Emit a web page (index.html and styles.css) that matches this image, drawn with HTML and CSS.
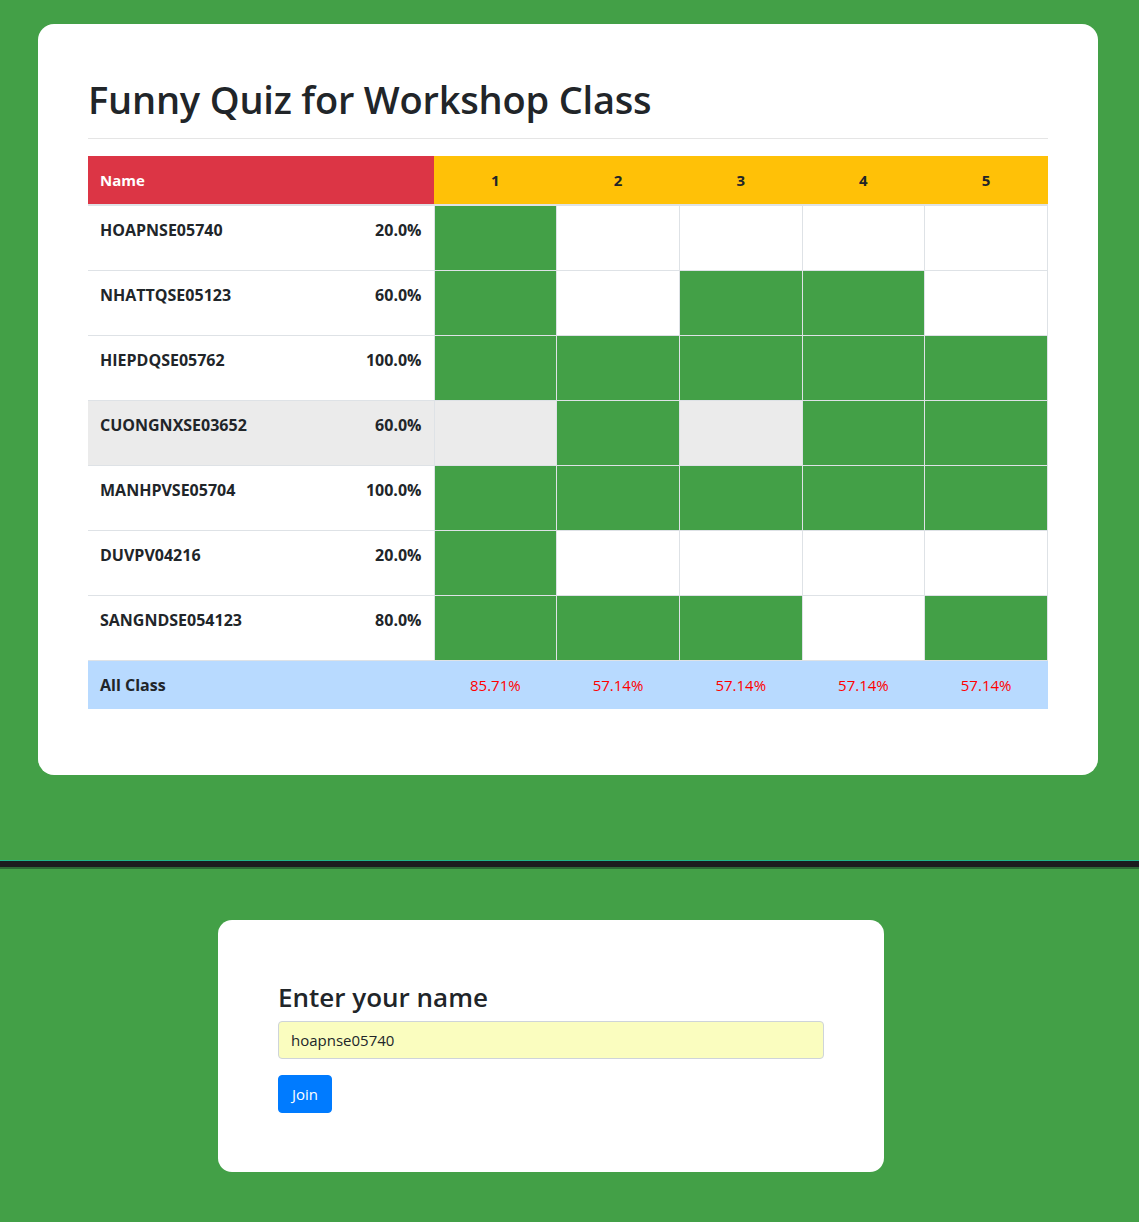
FILE: index.html
```html
<!DOCTYPE html>
<html>
<head>
<meta charset="utf-8">
<link rel="stylesheet" href="styles.css">
</head>
<body>
<section class="board">
  <h1 class="title">Funny Quiz for Workshop Class</h1>
  <hr class="rule">
  <table class="grid">
    <colgroup><col class="c-name"><col><col><col><col><col></colgroup>
    <thead>
      <tr>
        <th class="h-name">Name</th>
        <th class="h-q">1</th><th class="h-q">2</th><th class="h-q">3</th><th class="h-q">4</th><th class="h-q">5</th>
      </tr>
    </thead>
    <tbody>
      <tr><td class="name"><div class="name-in"><span>HOAPNSE05740</span><span>20.0%</span></div></td><td class="ok"></td><td></td><td></td><td></td><td></td></tr>
      <tr><td class="name"><div class="name-in"><span>NHATTQSE05123</span><span>60.0%</span></div></td><td class="ok"></td><td></td><td class="ok"></td><td class="ok"></td><td></td></tr>
      <tr><td class="name"><div class="name-in"><span>HIEPDQSE05762</span><span>100.0%</span></div></td><td class="ok"></td><td class="ok"></td><td class="ok"></td><td class="ok"></td><td class="ok"></td></tr>
      <tr class="hover"><td class="name"><div class="name-in"><span>CUONGNXSE03652</span><span>60.0%</span></div></td><td></td><td class="ok"></td><td></td><td class="ok"></td><td class="ok"></td></tr>
      <tr><td class="name"><div class="name-in"><span>MANHPVSE05704</span><span>100.0%</span></div></td><td class="ok"></td><td class="ok"></td><td class="ok"></td><td class="ok"></td><td class="ok"></td></tr>
      <tr><td class="name"><div class="name-in"><span>DUVPV04216</span><span>20.0%</span></div></td><td class="ok"></td><td></td><td></td><td></td><td></td></tr>
      <tr><td class="name"><div class="name-in"><span>SANGNDSE054123</span><span>80.0%</span></div></td><td class="ok"></td><td class="ok"></td><td class="ok"></td><td></td><td class="ok"></td></tr>
    </tbody>
    <tfoot>
      <tr class="total">
        <td class="t-name">All Class</td>
        <td class="t-p">85.71%</td><td class="t-p">57.14%</td><td class="t-p">57.14%</td><td class="t-p">57.14%</td><td class="t-p">57.14%</td>
      </tr>
    </tfoot>
  </table>
</section>

<div class="divider"></div>

<section class="join">
  <h3 class="join-title">Enter your name</h3>
  <input class="join-input" type="text" value="hoapnse05740">
  <button class="join-btn">Join</button>
</section>
</body>
</html>
```

FILE: styles.css
```css
* { box-sizing: border-box; }
html, body { margin: 0; padding: 0; }
body {
  background: #43a047;
  font-family: "Open Sans", "Noto Sans", sans-serif;
  color: #212529;
  min-height: 1222px;
  padding-top: 24px;
  overflow: hidden;
}
.board {
  margin-left: 38px;
  width: 1060px;
  background: #fff;
  border-radius: 16px;
  padding: 51px 50px 66px;
}
.title {
  margin: 0;
  font-size: 38px;
  font-weight: 600;
  line-height: 48px;
  letter-spacing: -0.2px;
}
.rule {
  margin: 15px 0 17px;
  border: 0;
  border-top: 1px solid #e5e5e5;
}
.grid {
  width: 960px;
  border-collapse: collapse;
  table-layout: fixed;
  font-size: 15px;
}
.c-name { width: 346px; }
.grid th {
  height: 49px;
  padding: 0 12px;
  font-weight: 700;
  border-bottom: 2px solid #dee2e6;
}
.h-name { background: #dc3545; color: #fff; text-align: left; }
.h-q { background: #ffc107; color: #212529; text-align: center; }
.grid tbody td {
  height: 65px;
  border: 1px solid #dee2e6;
  padding: 0;
}
.grid tbody td.name {
  border-left: 0;
  vertical-align: top;
  padding: 12px 12px;
  font-weight: 700;
  font-size: 16px;
}
.name-in {
  display: flex;
  justify-content: space-between;
  line-height: 24px;
}
.grid tbody td.ok { background: #43a047; }
.grid tbody tr.hover td { background: #ebebeb; }
.grid tbody tr.hover td.ok { background: #43a047; }
.total td {
  background: #b8daff;
  height: 49px;
  padding: 0 12px;
  border-top: 1px solid #dee2e6;
}
.t-name { font-weight: 700; font-size: 16px; }
.t-p { color: #ff0000; text-align: center; }
.divider {
  margin-top: 85px;
  height: 7px;
  background: #1c1c1e;
  border-top: 1px solid #1fb58a;
  box-shadow: 0 2px 0 #2d6a35;
}
.join {
  margin: 53px 0 0 218px;
  width: 666px;
  background: #fff;
  border-radius: 14px;
  padding: 60px 60px 59px;
}
.join-title {
  margin: 0 0 7px;
  font-size: 26px;
  font-weight: 600;
  line-height: 34px;
}
.join-input {
  display: block;
  width: 100%;
  height: 38px;
  padding: 6px 12px;
  font: inherit;
  font-size: 15px;
  color: #212529;
  background: #fafdbf;
  border: 1px solid #ced4da;
  border-radius: 4px;
  margin-bottom: 16px;
}
.join-btn {
  display: block;
  height: 38px;
  padding: 0 13px;
  font: inherit;
  font-size: 15px;
  color: #fff;
  background: #007bff;
  border: 1px solid #007bff;
  border-radius: 4px;
}
```
